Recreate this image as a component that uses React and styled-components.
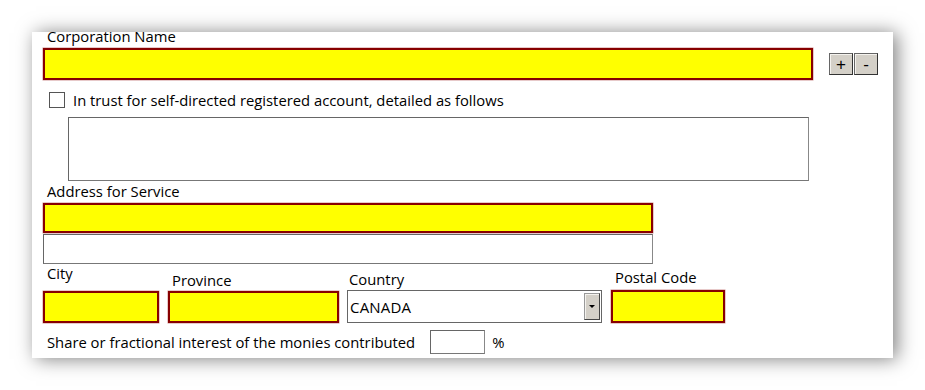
import React from "react";
import styled, { createGlobalStyle } from "styled-components";

const GlobalStyle = createGlobalStyle`
  html, body {
    margin: 0;
    padding: 0;
    background: #ffffff;
  }
  body {
    font-family: "Open Sans", "Noto Sans", sans-serif;
    color: #000;
  }
`;

const Page = styled.div`
  width: 925px;
  height: 390px;
  padding: 32px 0 0 32px;
  box-sizing: border-box;
`;

const Panel = styled.div`
  width: 861px;
  height: 326px;
  background: #fff;
  box-shadow: 4px 1px 18px rgba(0, 0, 0, 0.5);
  overflow: hidden;
  box-sizing: border-box;
  padding: 0 0 0 11px;
  display: flex;
  flex-direction: column;
`;

const Label = styled.div`
  font-size: 14.8px;
  line-height: 16px;
  padding-left: 4px;
  margin-top: ${(p) => p.$top || 0}px;
  white-space: nowrap;
`;

const Row = styled.div`
  display: flex;
  align-items: ${(p) => p.$align || "center"};
  margin-top: ${(p) => p.$top || 0}px;
`;

const YellowField = styled.div`
  width: ${(p) => p.$w}px;
  height: ${(p) => p.$h || 32}px;
  box-sizing: border-box;
  background: #ffff00;
  border: 2px solid #870000;
  box-shadow: 0 0 0 0.5px rgba(160, 40, 40, 0.5);
`;

const PlainField = styled.div`
  width: ${(p) => p.$w}px;
  height: ${(p) => p.$h}px;
  box-sizing: border-box;
  background: #fff;
  border: 1px solid #666;
  border-right-color: #888;
  border-bottom-color: #777;
  margin-left: ${(p) => p.$left || 0}px;
`;

const ButtonGroup = styled.div`
  display: flex;
  margin-left: 16px;
  margin-top: 5px;
  align-self: flex-start;
`;

const MiniButton = styled.div`
  width: 24px;
  height: 22px;
  box-sizing: border-box;
  background: #d4d0c8;
  border: 1px solid #333;
  border-top-color: #666;
  border-left-color: #666;
  box-shadow: inset 1px 1px 0 #f4f2ee;
  display: flex;
  align-items: center;
  justify-content: center;
  font-family: "Liberation Sans", Arial, sans-serif;
  font-size: 17px;
  line-height: 1;
  color: #000;
  & + & {
    margin-left: 1px;
  }
`;

const CheckBox = styled.div`
  width: 16px;
  height: 16px;
  box-sizing: border-box;
  border: 1px solid #555;
  background: #fff;
  margin-left: 6px;
`;

const CheckText = styled.span`
  font-size: 14.8px;
  line-height: 16px;
  margin-left: 8px;
  white-space: nowrap;
`;

const Column = styled.div`
  display: flex;
  flex-direction: column;
  margin-left: ${(p) => p.$left || 0}px;
`;

const ColLabel = styled.div`
  font-size: 14.8px;
  line-height: 16px;
  height: ${(p) => p.$h || 22}px;
  padding-left: ${(p) => p.$pad || 4}px;
  padding-top: ${(p) => p.$top || 0}px;
  box-sizing: border-box;
  white-space: nowrap;
`;

const Select = styled.div`
  width: 255px;
  height: 33px;
  box-sizing: border-box;
  border: 1px solid #666;
  background: #fff;
  display: flex;
  align-items: center;
  justify-content: space-between;
  padding: 2px 1px 2px 2px;
`;

const SelectValue = styled.span`
  font-size: 15px;
  letter-spacing: 0.2px;
`;

const DropButton = styled.div`
  width: 16px;
  height: 100%;
  box-sizing: border-box;
  background: #d4d0c8;
  border: 1px solid #444;
  border-top-color: #999;
  border-left-color: #999;
  box-shadow: inset 1px 1px 0 #f4f2ee;
  display: flex;
  align-items: center;
  justify-content: center;
  &::after {
    content: "";
    border-left: 3px solid transparent;
    border-right: 3px solid transparent;
    border-top: 3px solid #000;
  }
`;

const ShareText = styled.span`
  font-size: 14.8px;
  line-height: 16px;
  padding-left: 4px;
  white-space: nowrap;
`;

const Percent = styled.span`
  font-size: 14.8px;
  line-height: 16px;
  margin-left: 7px;
`;

export default function App() {
  return (
    <>
      <GlobalStyle />
      <Page>
        <Panel>
          <Label $top={-4}>Corporation Name</Label>
          <Row $align="flex-start" $top={4}>
            <YellowField $w={770} $h={32} />
            <ButtonGroup>
              <MiniButton>+</MiniButton>
              <MiniButton>-</MiniButton>
            </ButtonGroup>
          </Row>
          <Row $top={12}>
            <CheckBox />
            <CheckText>In trust for self-directed registered account, detailed as follows</CheckText>
          </Row>
          <Row $top={9}>
            <PlainField $w={741} $h={64} $left={25} />
          </Row>
          <Label $top={2}>Address for Service</Label>
          <Row $top={4}>
            <YellowField $w={610} $h={30} />
          </Row>
          <Row $top={1}>
            <PlainField $w={610} $h={30} />
          </Row>
          <Row $align="flex-end">
            <Column>
              <ColLabel $h={27} $top={1}>City</ColLabel>
              <YellowField $w={116} />
            </Column>
            <Column $left={9}>
              <ColLabel $top={3}>Province</ColLabel>
              <YellowField $w={171} />
            </Column>
            <Column $left={8}>
              <ColLabel $pad={2} $top={3}>Country</ColLabel>
              <Select>
                <SelectValue>CANADA</SelectValue>
                <DropButton />
              </Select>
            </Column>
            <Column $left={9}>
              <ColLabel $top={1}>Postal Code</ColLabel>
              <YellowField $w={114} $h={33} />
            </Column>
          </Row>
          <Row $top={7}>
            <ShareText>Share or fractional interest of the monies contributed</ShareText>
            <PlainField $w={55} $h={24} $left={15} />
            <Percent>%</Percent>
          </Row>
        </Panel>
      </Page>
    </>
  );
}
